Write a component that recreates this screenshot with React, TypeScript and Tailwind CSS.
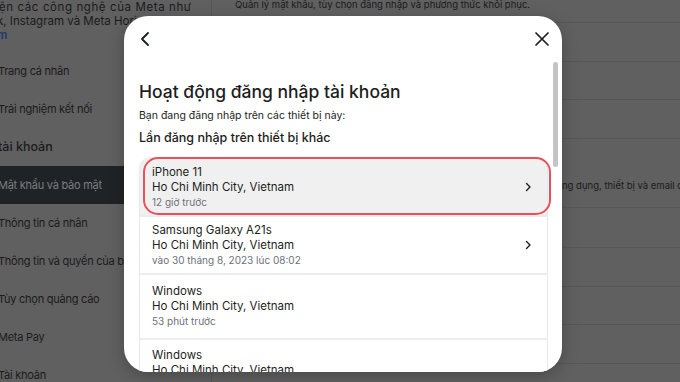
import React from 'react';

const font = { fontFamily: 'Inter, "Noto Sans", sans-serif' };

const topItems = ['Trang cá nhân', 'Trải nghiệm kết nối'];

const lowerItems = [
	'Thông tin cá nhân',
	'Thông tin và quyền của bạn',
	'Tùy chọn quảng cáo',
	'Meta Pay',
	'Tài khoản',
];

type Session = {
	device: string;
	place: string;
	time: string;
	h: string;
	arrow?: boolean;
	active?: boolean;
};

const sessions: Session[] = [
	{ device: 'iPhone 11', place: 'Ho Chi Minh City, Vietnam', time: '12 giờ trước', h: 'h-[58px] pt-[8px]', arrow: true, active: true },
	{ device: 'Samsung Galaxy A21s', place: 'Ho Chi Minh City, Vietnam', time: 'vào 30 tháng 8, 2023 lúc 08:02', h: 'h-[56px] pt-[6px]', arrow: true },
	{ device: 'Windows', place: 'Ho Chi Minh City, Vietnam', time: '53 phút trước', h: 'h-[63px] pt-[9px]' },
	{ device: 'Windows', place: 'Ho Chi Minh City, Vietnam', time: '2 giờ trước', h: 'h-[60px] pt-[8px]' },
];

const Sidebar = () => (
	<div className="w-[212px] shrink-0 border-r border-[#575757] text-[#1b1b1b] overflow-hidden whitespace-nowrap">
		<div className="text-[11.5px] leading-[14px] ml-[-1px]">
			<div className="h-[14px] tracking-[0.6px]">ện các công nghệ của Meta như</div>
			<div className="h-[14px] ml-[-2px]">k, Instagram và Meta Horizon</div>
			<div className="h-[14px] ml-[-2px] text-[#1d3a6b] font-semibold">m</div>
		</div>
		<div className="mt-[10px]">
			{topItems.map((s) => (
				<div key={s} className="h-[38px] flex items-center text-[11px] tracking-[-0.25px] ml-[-2px]">
					{s}
				</div>
			))}
		</div>
		<div className="h-[38px] flex items-center text-[12.5px] font-medium ml-[-2px]">tài khoản</div>
		<div className="h-[38px] flex items-center text-[11px] tracking-[-0.25px] bg-[#202326] text-[#7a7d81]">
			<span className="ml-[-2px]">Mật khẩu và bảo mật</span>
		</div>
		{lowerItems.map((s) => (
			<div key={s} className="h-[38px] flex items-center text-[11px] tracking-[-0.25px] ml-[-2px]">
				{s}
			</div>
		))}
	</div>
);

const MainBg = () => (
	<div className="flex-1 text-[#1b1b1b] text-[9.5px] whitespace-nowrap overflow-hidden">
		<div className="h-[23px] pl-[23px] border-b border-[#575757] leading-[10px]">
			Quản lý mật khẩu, tùy chọn đăng nhập và phương thức khôi phục.
		</div>
		<div className="h-[39px] border-b border-[#575757]" />
		<div className="h-[38px] border-b border-[#575757]" />
		<div className="h-[39px] border-b border-[#575757]" />
		<div className="h-[69px] border-b border-[#575757] pl-[23px] pt-[40px]">
			<span className="inline-block w-[327px] overflow-hidden align-bottom">
				Xem và quản lý thông tin đăng nhập được lưu trên các ứ
			</span>
			ng dụng, thiết bị và email đã kết nối
		</div>
		<div className="h-[40px] border-b border-[#575757]" />
		<div className="h-[39px] border-b border-[#575757]" />
		<div className="h-[38px] border-b border-[#575757]" />
		<div className="h-[39px] border-b border-[#575757]" />
	</div>
);

const Chevron = () => (
	<svg width="7" height="10" viewBox="0 0 7 10" fill="none" stroke="#1c1e21" strokeWidth="1.4" strokeLinecap="round" strokeLinejoin="round">
		<path d="M1.5 1.5L5 5 1.5 8.5" />
	</svg>
);

const SessionRow = ({ s }: { s: Session }) => (
	<div className={`${s.h} flex items-start pl-[12px] pr-[15px] ${s.active ? 'bg-[#f0f0f0]' : 'bg-white'}`}>
		<div className="flex-1">
			<div className="text-[11.5px] leading-[15px] text-[#1c1e21]">{s.device}</div>
			<div className="text-[11.5px] leading-[15px] text-[#1c1e21]">{s.place}</div>
			<div className="text-[10px] leading-[15px] text-[#6d7178]">{s.time}</div>
		</div>
		{s.arrow && (
			<div className="pt-[17px]">
				<Chevron />
			</div>
		)}
	</div>
);

const Modal = () => (
	<div className="absolute left-[124px] top-[16px] w-[438px] h-[356px] rounded-[24px] bg-white overflow-hidden shadow-[0_4px_16px_rgba(0,0,0,0.25)]">
		<div className="h-[46px] flex items-center justify-between pl-[15px] pr-[12px]">
			<svg width="14" height="16" viewBox="0 0 14 16" fill="none" stroke="#1c1e21" strokeWidth="1.8" strokeLinecap="round" strokeLinejoin="round">
				<path d="M9 2L3 8l6 6" />
			</svg>
			<svg width="16" height="16" viewBox="0 0 16 16" fill="none" stroke="#1c1e21" strokeWidth="1.7" strokeLinecap="round">
				<path d="M2 2l12 12M14 2L2 14" />
			</svg>
		</div>
		<div className="absolute right-[4px] top-[46px] w-[5px] h-[105px] rounded-full bg-[#c4c4c4]" />
		<div className="pl-[15px] pr-[14px]">
			<h2 className="mt-[18px] text-[17.5px] leading-[24px] font-medium text-[#1c1e21]">Hoạt động đăng nhập tài khoản</h2>
			<p className="mt-[4px] text-[10.5px] leading-[16px] text-[#1c1e21]">Bạn đang đăng nhập trên các thiết bị này:</p>
			<p className="mt-[5px] text-[12.5px] leading-[18px] font-medium text-[#1c1e21]">Lần đăng nhập trên thiết bị khác</p>
			<div className="relative mt-[10px]">
				<div className="rounded-t-[12px] border-x border-[#e8e8e8] bg-[#ececec] flex flex-col gap-[2px] overflow-hidden">
					{sessions.map((s, i) => (
						<SessionRow key={i} s={s} />
					))}
				</div>
				<div className="absolute left-[4px] right-[-3px] top-0 h-[58px] rounded-[15px] border-2 border-[#e9505c]" />
			</div>
		</div>
	</div>
);

export default function App() {
	return (
		<div className="relative w-[680px] h-[382px] overflow-hidden bg-[#606060]" style={font}>
			<div className="flex h-full">
				<Sidebar />
				<MainBg />
			</div>
			<Modal />
		</div>
	);
}
